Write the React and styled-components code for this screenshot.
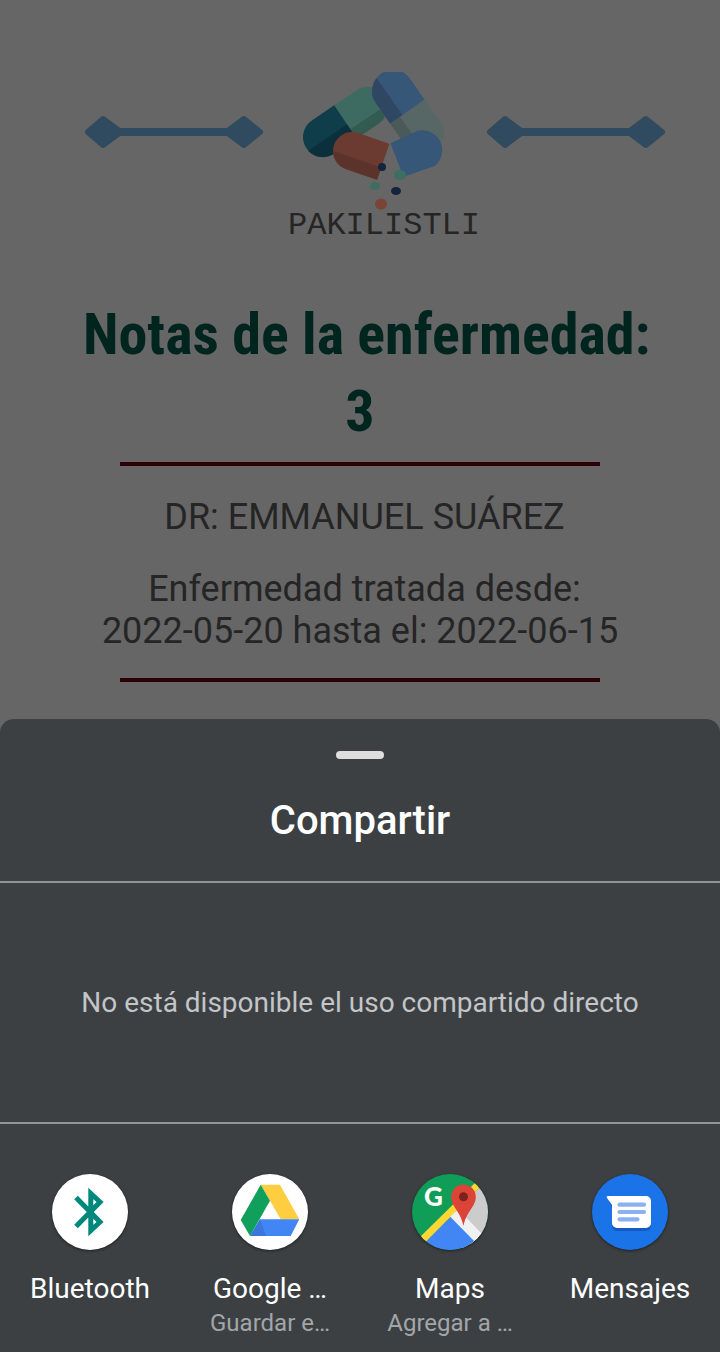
import React from 'react';
import styled, { createGlobalStyle } from 'styled-components';

const GlobalStyle = createGlobalStyle`
  *, *::before, *::after { box-sizing: border-box; }
  body {
    margin: 0;
    background: #666666;
    font-family: Roboto, "Liberation Sans", sans-serif;
  }
  h1, h2, p, ul { margin: 0; padding: 0; }
`;

const Page = styled.div`
  display: flex;
  flex-direction: column;
  min-height: 100vh;
`;

const Notes = styled.main`
  flex: 1;
  display: flex;
  flex-direction: column;
  align-items: center;
  padding: 72px 48px 36px;
  color: #252525;
  text-align: center;
`;

const Banner = styled.header`
  display: flex;
  justify-content: center;
  align-items: flex-start;
  padding-left: 30px;
`;

const Ornament = styled.svg`
  flex: none;
  width: 180px;
  height: 34px;
  margin-top: 43px;
`;

const Brand = styled.div`
  display: flex;
  flex-direction: column;
  align-items: center;
  width: 222px;
`;

const Pills = styled.svg`
  width: 144px;
  height: 138px;
`;

const BrandName = styled.p`
  padding-left: 18px;
  font: 32px/32px "Liberation Mono", monospace;
`;

const Title = styled.h1`
  margin-top: 54px;
  color: #00251f;
  font: bold 58px/77px "Roboto Condensed", "Liberation Sans Narrow", sans-serif;
`;

const Rule = styled.hr`
  width: 480px;
  max-width: 100%;
  height: 4px;
  margin: ${({ $top }) => $top}px 0 0;
  border: 0;
  background: #2c0006;
`;

const Detail = styled.p`
  margin-top: 30px;
  font-size: 36px;
  line-height: 42px;
`;

const Sheet = styled.section`
  border-radius: 14px 14px 0 0;
  background: #3c4043;
  color: #ffffff;
  text-align: center;
`;

const SheetHeader = styled.header`
  display: flex;
  flex-direction: column;
  align-items: center;
  padding: 32px 24px 36px;
  border-bottom: 2px solid #8f9699;
`;

const Handle = styled.div`
  width: 48px;
  height: 8px;
  border-radius: 4px;
  background: #dedede;
`;

const SheetTitle = styled.h2`
  margin-top: 38px;
  font-size: 40px;
  font-weight: 500;
  line-height: 48px;
`;

const DirectShare = styled.p`
  padding: 103px 24px;
  border-bottom: 2px solid #8f9699;
  color: #c3c5c8;
  font-size: 28px;
  line-height: 33px;
`;

const Targets = styled.ul`
  display: grid;
  grid-template-columns: repeat(4, 1fr);
  padding: 50px 0 15px;
  list-style: none;
`;

const Target = styled.button`
  display: flex;
  flex-direction: column;
  align-items: center;
  width: 100%;
  padding: 0;
  border: 0;
  background: none;
  color: inherit;
  font: inherit;
`;

const AppIcon = styled.svg`
  width: 76px;
  height: 76px;
  border-radius: 50%;
  background: ${({ $fill }) => $fill};
  box-shadow: 0 1px 3px rgba(0, 0, 0, 0.5);
`;

const TargetName = styled.span`
  margin-top: 22px;
  font-size: 28px;
  line-height: 33px;
`;

const TargetHint = styled.span`
  min-height: 28px;
  margin-top: 4px;
  color: #a3a6a9;
  font-size: 24px;
  line-height: 28px;
`;

function Connector() {
  return (
    <Ornament viewBox="0 0 180 34" aria-hidden="true">
      <g fill="#304b5f" stroke="#304b5f" strokeWidth="6" strokeLinejoin="round">
        <path d="M19 4 35 16H144L160 4 176 17 160 30 144 18H35L19 30 4 17Z" />
      </g>
    </Ornament>
  );
}

function PillsLogo() {
  return (
    <Pills viewBox="0 0 144 138" aria-hidden="true">
      <g transform="translate(20 65) rotate(-34)">
        <path d="M27-20H54A20 20 0 0 1 54 20H27Z" fill="#3e6b61" />
        <path d="M27 9H71A20 20 0 0 1 54 20H27Z" fill="#335b50" />
        <path d="M27-20H0A20 20 0 0 0 0 20H27Z" fill="#103d4a" />
        <path d="M27 3H-20A20 20 0 0 0 0 20H27Z" fill="#0b303c" />
      </g>
      <g transform="translate(90 19) rotate(55)">
        <path d="M25-21H52A21 21 0 0 1 52 21H25Z" fill="#566765" />
        <path d="M25 9H70A21 21 0 0 1 52 21H25Z" fill="#4b5a57" />
        <path d="M25-21H0A21 21 0 0 0 0 21H25Z" fill="#365777" />
        <path d="M25 6H-20A21 21 0 0 0 0 21H25Z" fill="#304763" />
      </g>
      <g transform="translate(49 79) rotate(19)">
        <path d="M33-19H0A19 19 0 0 0 0 19H33Z" fill="#6b3b31" />
        <path d="M33 6H-18A19 19 0 0 0 0 19H33Z" fill="#5c332b" />
      </g>
      <path
        transform="translate(94 88) rotate(-21)"
        d="M0-18L29-20A20 20 0 0 1 33 19L0 18Z"
        fill="#365777"
      />
      <ellipse cx="79" cy="95" rx="4" ry="4" fill="#15233c" />
      <ellipse cx="97" cy="103" rx="6" ry="5" fill="#3c6e62" />
      <ellipse cx="72" cy="114" rx="5" ry="4" fill="#3c6e62" />
      <ellipse cx="93" cy="119" rx="5" ry="4" fill="#15233c" />
      <ellipse cx="78" cy="132" rx="6" ry="5.5" fill="#7a4437" />
    </Pills>
  );
}

function BluetoothIcon() {
  return (
    <AppIcon $fill="#ffffff" viewBox="0 0 76 76" aria-hidden="true">
      <path
        d="M24 23.5 48 48 38.8 56.5V19.5L48 28 24 52.5"
        fill="none"
        stroke="#00897b"
        strokeWidth="5"
      />
    </AppIcon>
  );
}

function DriveIcon() {
  return (
    <AppIcon $fill="#ffffff" viewBox="0 0 76 76" aria-hidden="true">
      <path d="M28.7 10.7H48L67.3 45.3H48.7Z" fill="#ffcd40" />
      <path d="M28 45.3H67.3L58.7 62H18Z" fill="#4285f4" />
      <path d="M28 45.3 34 62H18Z" fill="#3a76dc" />
      <path d="M28.7 10.7 38 26.7 18 62 8.7 46Z" fill="#11a05c" />
    </AppIcon>
  );
}

function MapsIcon() {
  return (
    <AppIcon $fill="#109d58" viewBox="0 0 76 76" aria-hidden="true">
      <path d="M76 5V76H50L38 43Z" fill="#cccccc" />
      <path d="M38 43 46 35 71 61 60 72Z" fill="#f1f1f1" />
      <path d="M38.5 43 68 73V76H6V75Z" fill="#4285f4" />
      <path d="M7 64 65 7 69 12 13 68.5Z" fill="#fdd835" />
      <path d="M39 42 43 38 51 52 46 50Z" fill="#f1f1f1" />
      <text x="12" y="32" fill="#ffffff" fontFamily="Lato, Roboto, sans-serif" fontSize="26" fontWeight="900">G</text>
      <path
        d="M51.5 10.5A12.3 12.3 0 0 1 63.8 22.8C63.8 33 54.5 37 51.5 52 48.5 37 39.2 33 39.2 22.8A12.3 12.3 0 0 1 51.5 10.5Z"
        fill="#dc4437"
      />
      <circle cx="51.5" cy="22.8" r="4.5" fill="#7b231e" />
    </AppIcon>
  );
}

function MessagesIcon() {
  return (
    <AppIcon $fill="#1b73e8" viewBox="0 0 76 76" aria-hidden="true">
      <path
        d="M15.5 24H54A5 5 0 0 1 59 29V52A5 5 0 0 1 54 57H25A5 5 0 0 1 20 52V33Z"
        fill="#1659c0"
      />
      <path
        d="M16 22H54A5 5 0 0 1 59 27V49A5 5 0 0 1 54 54H25A5 5 0 0 1 20 49V31L15 24Q14 22 16 22Z"
        fill="#ffffff"
      />
      <path
        d="M27.5 30.7H52M27.5 38H52M27.5 45.3H45.5"
        stroke="#8cb0f2"
        strokeWidth="4.2"
        strokeLinecap="round"
      />
    </AppIcon>
  );
}

const targets = [
  { name: 'Bluetooth', Icon: BluetoothIcon },
  { name: 'Google …', hint: 'Guardar e…', Icon: DriveIcon },
  { name: 'Maps', hint: 'Agregar a …', Icon: MapsIcon },
  { name: 'Mensajes', Icon: MessagesIcon },
];

export default function App() {
  return (
    <Page>
      <GlobalStyle />
      <Notes>
        <Banner>
          <Connector />
          <Brand>
            <PillsLogo />
            <BrandName>PAKILISTLI</BrandName>
          </Brand>
          <Connector />
        </Banner>
        <Title>
          {'\u00a0'}Notas de la enfermedad:
          <br />3
        </Title>
        <Rule $top={12} />
        <Detail>{'\u00a0'}DR: EMMANUEL SUÁREZ</Detail>
        <Detail>
          {'\u00a0'}Enfermedad tratada desde:
          <br />
          2022-05-20 hasta el: 2022-06-15
        </Detail>
        <Rule $top={26} />
      </Notes>
      <Sheet aria-labelledby="share-title">
        <SheetHeader>
          <Handle />
          <SheetTitle id="share-title">Compartir</SheetTitle>
        </SheetHeader>
        <DirectShare>No está disponible el uso compartido directo</DirectShare>
        <Targets>
          {targets.map(({ name, hint, Icon }) => (
            <li key={name}>
              <Target type="button">
                <Icon />
                <TargetName>{name}</TargetName>
                <TargetHint>{hint}</TargetHint>
              </Target>
            </li>
          ))}
        </Targets>
      </Sheet>
    </Page>
  );
}
